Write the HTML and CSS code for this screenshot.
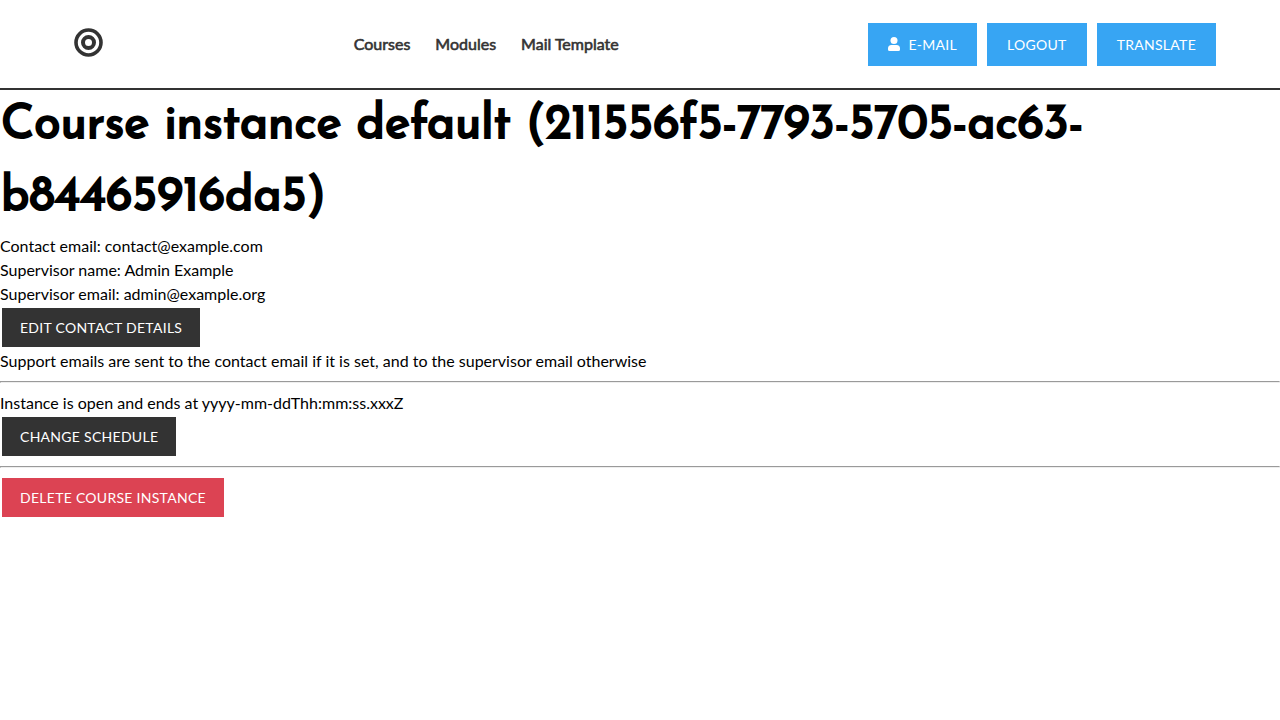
FILE: index.html
```html
<!DOCTYPE html>
<html lang="en">
<head>
<meta charset="utf-8">
<meta name="viewport" content="width=device-width, initial-scale=1">
<title>Course instance</title>
<link rel="stylesheet" href="styles.css">
</head>
<body>
<header class="header">
  <nav class="navbar" aria-label="Main">
    <a class="logo" href="#" aria-label="Home">
      <svg width="32" height="32" viewBox="0 0 32 32" aria-hidden="true"><g fill="none" stroke="#333"><circle cx="16.500" cy="16.500" r="12.500" stroke-width="3.600"/><circle cx="16.500" cy="16.500" r="5.500" stroke-width="4"/></g></svg>
    </a>
    <ul class="links">
      <li><a href="#">Courses</a></li>
      <li><a href="#">Modules</a></li>
      <li><a href="#">Mail Template</a></li>
    </ul>
    <div class="actions">
      <button class="button button-blue" type="button"><svg class="user" width="12" height="14" viewBox="0 0 12 14" aria-hidden="true"><circle cx="6" cy="3.500" r="3.500" fill="currentColor"/><path d="M3.5 8h5A3.5 3.5 0 0 1 12 11.5v1A1.5 1.5 0 0 1 10.5 14h-9A1.5 1.5 0 0 1 0 12.500v-1A3.500 3.500 0 0 1 3.500 8z" fill="currentColor"/></svg>E-mail</button>
      <button class="button button-blue" type="button">Logout</button>
      <button class="button button-blue" type="button">Translate</button>
    </div>
  </nav>
</header>
<main>
  <h1 class="title">Course instance default (211556f5-7793-5705-ac63-b84465916da5)</h1>
  <div>Contact email: contact@example.com</div>
  <div>Supervisor name: Admin Example</div>
  <div>Supervisor email: admin@example.org</div>
  <div class="row"><button class="button button-dark" type="button">Edit contact details</button></div>
  <div>Support emails are sent to the contact email if it is set, and to the supervisor email otherwise</div>
  <hr>
  <div>Instance is open and ends at yyyy-mm-ddThh:mm:ss.xxxZ</div>
  <div class="row"><button class="button button-dark" type="button">Change schedule</button></div>
  <hr>
  <div class="row"><button class="button button-red" type="button">Delete course instance</button></div>
</main>
</body>
</html>
```
FILE: styles.css
```css
* { box-sizing: border-box; }
body { margin: 0; color: #000; background: #fff; font: 16px/24px Lato, sans-serif; }
.header { border-bottom: 2px solid #333; }
.navbar { display: flex; align-items: center; justify-content: space-between; min-height: 88px; padding: 0 64px 0 72px; }
.logo { display: flex; padding-bottom: 4px; }
.links { display: flex; gap: 25px; margin: 0; padding: 0; list-style: none; }
.links a { color: #333; -webkit-text-stroke: 0.6px #333; text-decoration: none; }
.actions { display: flex; gap: 10px; }
.row { display: flex; padding: 2px; }
.button { border: 0; color: #fff; font: 14px/19px Lato, sans-serif; letter-spacing: 0.02em; text-transform: uppercase; cursor: pointer; padding: 10px 18px; }
.button-blue { display: flex; align-items: center; padding: 12px 20px; background: #37a5f3; }
.button-dark { background: #333; }
.button-red { background: #dc4353; }
.user { margin-right: 8px; }
.title { margin: 0; padding: 0 1px; font: 400 48px/72px "Josefin Sans", Lato, sans-serif; -webkit-text-stroke: 2px #000; }
hr { margin: 8px 0; }
```
